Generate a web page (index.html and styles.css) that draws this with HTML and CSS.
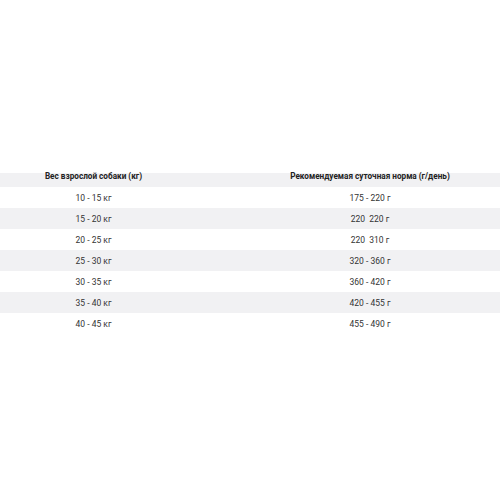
FILE: index.html
```html
<!DOCTYPE html>
<html lang="ru">
<head>
<meta charset="utf-8">
<link rel="stylesheet" href="styles.css">
</head>
<body>
<div class="wrap">
  <div class="table">
    <div class="row head"><div class="c1">Вес взрослой собаки (кг)</div><div class="c2">Рекомендуемая суточная норма (г/день)</div></div>
    <div class="row"><div class="c1">10 - 15 кг</div><div class="c2">175 - 220 г</div></div>
    <div class="row alt"><div class="c1">15 - 20 кг</div><div class="c2">220&nbsp; 220 г</div></div>
    <div class="row"><div class="c1">20 - 25 кг</div><div class="c2">220&nbsp; 310 г</div></div>
    <div class="row alt"><div class="c1">25 - 30 кг</div><div class="c2">320 - 360 г</div></div>
    <div class="row"><div class="c1">30 - 35 кг</div><div class="c2">360 - 420 г</div></div>
    <div class="row alt"><div class="c1">35 - 40 кг</div><div class="c2">420 - 455 г</div></div>
    <div class="row"><div class="c1">40 - 45 кг</div><div class="c2">455 - 490 г</div></div>
  </div>
</div>
</body>
</html>
```
FILE: styles.css
```css
html, body { margin: 0; padding: 0; background: #fff; }
body { font-family: Roboto, "Liberation Sans", sans-serif; color: #333; }
.wrap { padding-top: 166px; width: 500px; overflow: hidden; }
.table { width: 553px; }
.row { display: grid; grid-template-columns: 187px 366px; height: 21px; align-items: center; font-size: 8.5px; text-align: center; }
.alt { background: #f1f1f3; }
.head { background: linear-gradient(to bottom, #fff 0, #fff 7px, #f1f1f3 7px); font-weight: 700; font-size: 8.2px; color: #222; }
.head > div { margin-top: -2px; }
```
